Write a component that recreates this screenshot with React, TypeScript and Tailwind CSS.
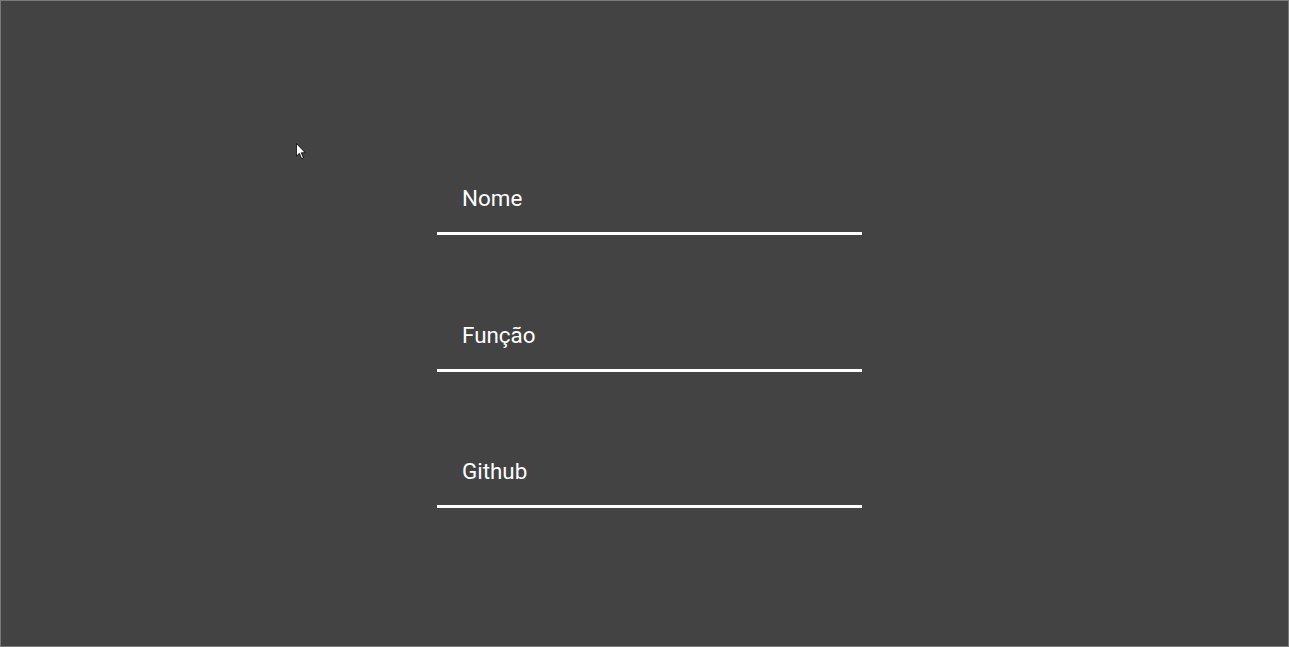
import { useState } from "react";

const fields = ["Nome", "Função", "Github"];

const Cursor = () => (
  <svg
    width="11"
    height="17"
    viewBox="0 0 13 20"
    className="absolute left-[295px] top-[142px]"
  >
    <path
      d="M0.5 0.5 L0.5 15.5 L4 12.2 L6.6 18.5 L8.8 17.6 L6.3 11.5 L11 11.5 Z"
      fill="#fff"
      stroke="#000"
      strokeWidth="1"
      strokeLinejoin="round"
    />
  </svg>
);

const Field = ({ label }: { label: string }) => {
  const [value, setValue] = useState("");
  return (
    <div className="w-[425px] border-b-[3px] border-white pb-[21px] pl-[25px]">
      <input
        type="text"
        value={value}
        onChange={(e) => setValue(e.target.value)}
        placeholder={label}
        className="block h-[26px] w-full bg-transparent text-[22.4px] leading-[26px] text-white outline-none placeholder:text-white"
        style={{ fontFamily: "Roboto, 'Noto Sans', sans-serif" }}
      />
    </div>
  );
};

export default function App() {
  return (
    <div className="relative h-[647px] w-full overflow-hidden border border-[#7a7a7a] bg-[#434343]">
      <Cursor />
      <div className="flex flex-col gap-[86.5px] pl-[436px] pt-[184px]">
        {fields.map((f) => (
          <Field key={f} label={f} />
        ))}
      </div>
    </div>
  );
}
